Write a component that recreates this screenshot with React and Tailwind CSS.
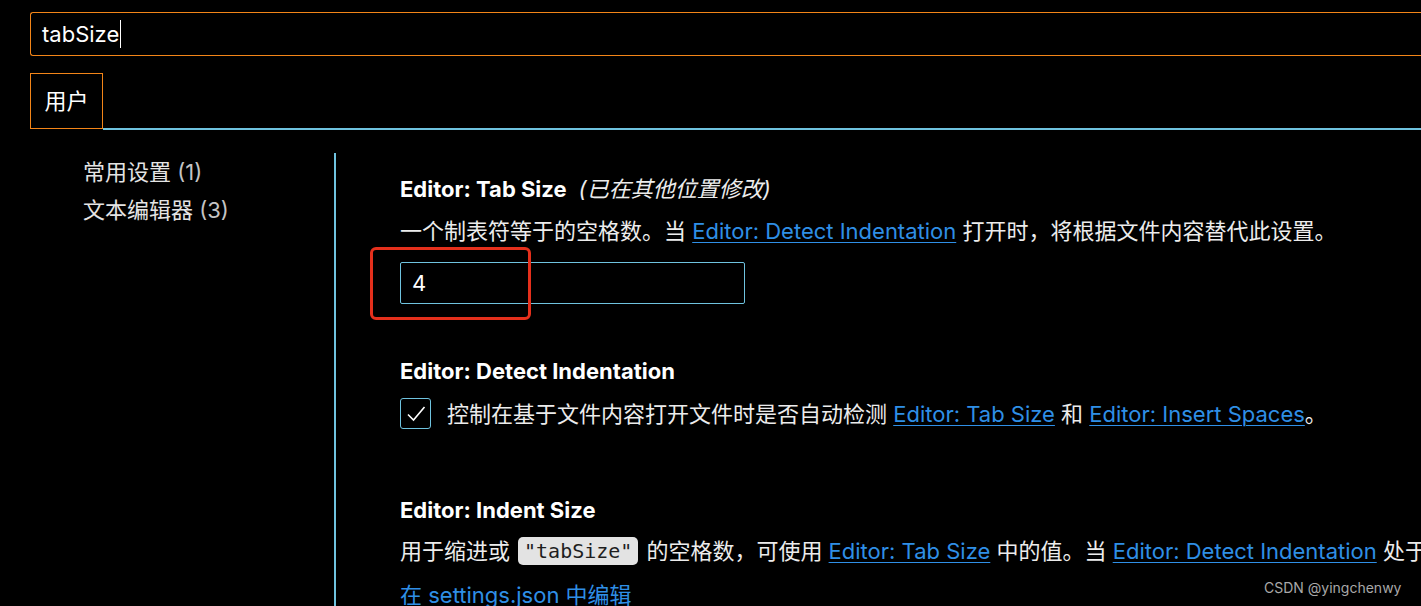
import React from 'react';

const font = { fontFamily: '"Inter", "Noto Sans CJK SC", sans-serif' };

function Link({ children }) {
  return <span className="text-[#2f8fe6] underline underline-offset-[3px] decoration-1">{children}</span>;
}

export default function App() {
  return (
    <div className="relative w-[1421px] h-[606px] bg-black overflow-hidden text-[22px] text-[#ececec]" style={font}>
      {/* search */}
      <div className="ml-[30px] mt-[12px] h-[44px] border border-r-0 border-[#f38518] rounded-l-[3px] flex items-center pl-[11px]">
        <span className="text-white">tabSize</span>
        <span className="w-px h-[28px] bg-white ml-px" />
      </div>

      {/* tabs */}
      <div className="mt-[17px] flex pl-[30px]">
        <div className="w-[73px] h-[56px] border border-[#f38518] flex items-center justify-center text-white">用户</div>
        <div className="flex-1 border-b-2 border-[#6fc3df] -mb-px" />
      </div>

      {/* body */}
      <div className="flex mt-[24px] h-[460px]">
        <div className="w-[334px] shrink-0 pl-[83px] leading-[38px] text-[#e4e4e4]">
          <div>常用设置 <span className="text-[#c4c4c4]">(1)</span></div>
          <div>文本编辑器 <span className="text-[#c4c4c4]">(3)</span></div>
        </div>
        <div className="w-[2px] shrink-0 bg-[#6fc3df]" />
        <div className="pl-[64px] pt-[21px] leading-[30px] whitespace-nowrap">
          <div className="flex items-baseline">
            <span className="font-bold text-white">Editor: Tab Size</span>
            <span className="italic ml-[12px]">(已在其他位置修改)</span>
          </div>
          <div className="mt-[12px]">
            一个制表符等于的空格数。当 <Link>Editor: Detect Indentation</Link> 打开时，将根据文件内容替代此设置。
          </div>
          <div className="mt-[16px] w-[345px] h-[42px] border border-[#6fc3df] rounded-[2px] flex items-center pl-[11px] text-white">4</div>

          <div className="mt-[52px] font-bold text-white">Editor: Detect Indentation</div>
          <div className="mt-[12px] flex items-center gap-[16px]">
            <div className="w-[31px] h-[31px] border border-[#6fc3df] rounded-[3px] flex items-center justify-center">
              <svg width="22" height="22" viewBox="0 0 22 22" fill="none" stroke="white" strokeWidth="1.6">
                <path d="M3 11.5 L8.5 17 L19.5 4" />
              </svg>
            </div>
            <div>
              控制在基于文件内容打开文件时是否自动检测 <Link>Editor: Tab Size</Link> 和 <Link>Editor: Insert Spaces</Link>。
            </div>
          </div>

          <div className="mt-[66px] font-bold text-white">Editor: Indent Size</div>
          <div className="mt-[11px] flex items-center">
            <span>用于缩进或</span>
            <span className="mx-[8px] px-[6px] h-[28px] flex items-center rounded-[5px] bg-[#e3e3e3] text-[#1e1e1e] text-[20px]" style={{ fontFamily: '"DejaVu Sans Mono", monospace' }}>"tabSize"</span>
            <span>
              的空格数，可使用 <Link>Editor: Tab Size</Link> 中的值。当 <Link>Editor: Detect Indentation</Link> 处于打开状态时，将根据文件内容替代此设置。
            </span>
          </div>
          <div className="mt-[14px] text-[#2f8fe6]">在 settings.json 中编辑</div>
        </div>
      </div>

      {/* annotation */}
      <div className="absolute left-[370px] top-[247px] w-[161px] h-[73px] border-[3px] border-[#e5301c] rounded-[6px]" />

      {/* watermark */}
      <div className="absolute left-[1264px] top-[577px] text-[14px] text-[#a8a8a8]">CSDN @yingchenwy</div>
    </div>
  );
}
